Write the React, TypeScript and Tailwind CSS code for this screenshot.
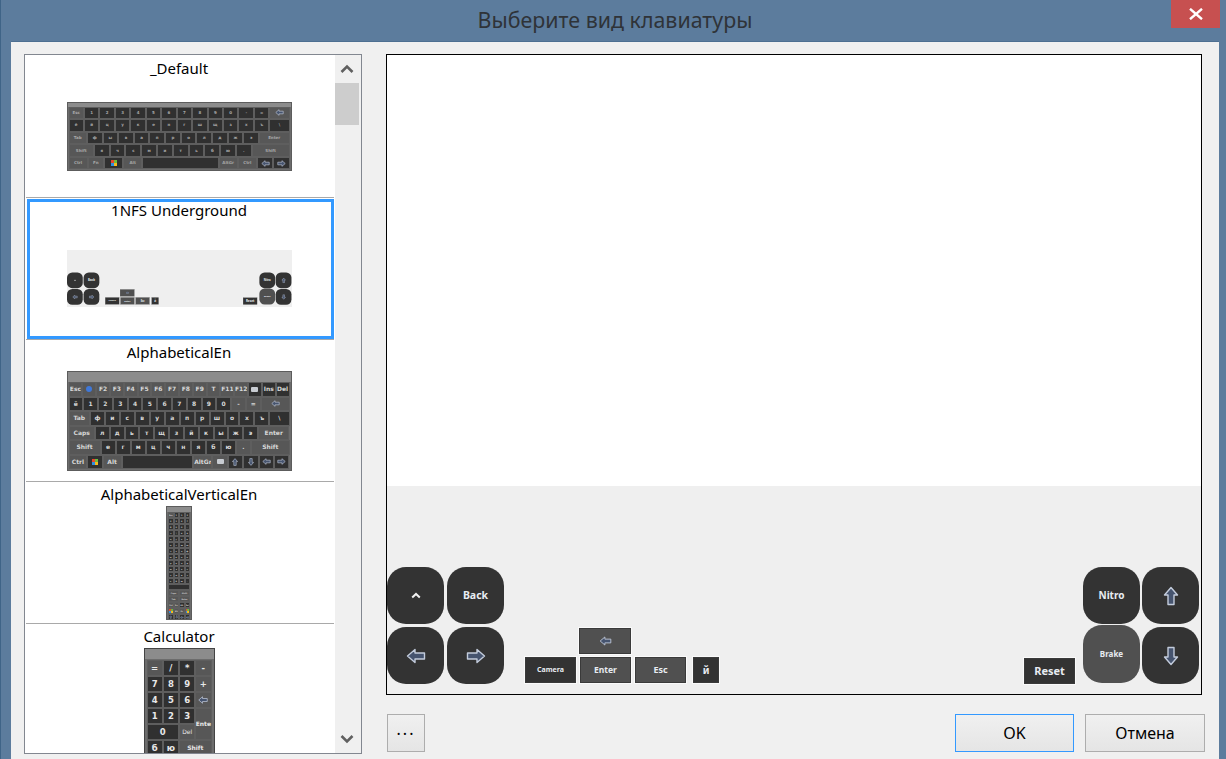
import { clsx } from 'clsx'

type Dir = 'left' | 'right' | 'up' | 'down'
type MiniKeyDef = { t: string; w?: number; light?: boolean }

const dirClass: Record<Dir, string> = {
  left: '',
  right: 'rotate-180',
  up: 'rotate-90',
  down: '-rotate-90',
}

function Arrow({ dir, className }: { dir: Dir; className?: string }) {
  return (
    <svg viewBox="0 0 20 16" className={clsx(dirClass[dir], className)}>
      <path
        d="M1.5 8 L9 1.5 V5 H18.5 V11 H9 V14.5 Z"
        fill="#46546f"
        stroke="#c3ccdc"
        strokeWidth="1.4"
        strokeLinejoin="round"
      />
    </svg>
  )
}

function WinLogo({ className }: { className?: string }) {
  return (
    <span className={clsx('grid grid-cols-2', className)}>
      <span className="bg-[#e8452c]" />
      <span className="bg-[#6cbb3c]" />
      <span className="bg-[#2f8fe0]" />
      <span className="bg-[#f6b91b]" />
    </span>
  )
}

function keys(s: string, light = false): MiniKeyDef[] {
  return s.split(' ').map((t) => ({ t, light }))
}

function MiniKey({ def }: { def: MiniKeyDef }) {
  let content = <span>{def.t}</span>
  if (def.t === '<') content = <Arrow dir="left" className="w-[9px] h-[7px]" />
  if (def.t === '>') content = <Arrow dir="right" className="w-[9px] h-[7px]" />
  if (def.t === '^') content = <Arrow dir="up" className="w-[8px] h-[8px]" />
  if (def.t === 'v') content = <Arrow dir="down" className="w-[8px] h-[8px]" />
  if (def.t === 'win') content = <WinLogo className="w-[6px] h-[6px]" />
  if (def.t === 'dot') content = <span className="h-[6px] w-[6px] rounded-full bg-[#3f78d8]" />
  if (def.t === 'card') content = <span className="h-[5px] w-[7px] rounded-[1px] bg-[#c8ccd2]" />
  if (def.t === '_') content = <span />
  return (
    <div
      className={clsx(
        'flex min-w-0 items-center justify-center overflow-hidden border border-[#5e5e5e]',
        def.light ? 'bg-[#575757]' : 'bg-[#303030]',
      )}
      style={{ flexGrow: def.w ?? 1, flexBasis: 0 }}
    >
      {content}
    </div>
  )
}

function MiniKeyboard({
  rows,
  className,
  textClass,
  band,
  rowClass,
}: {
  rows: MiniKeyDef[][]
  className: string
  textClass: string
  band: string
  rowClass: string
}) {
  return (
    <div
      className={clsx(
        'flex shrink-0 flex-col border border-[#5c5c5c] bg-[#6c6c6c] font-["DejaVu_Sans",sans-serif] font-bold leading-none',
        className,
        textClass,
      )}
    >
      <div className={clsx('shrink-0 bg-[#8c8c8c]', band)} />
      <div className="flex flex-1 flex-col px-px">
        {rows.map((row, i) => (
          <div key={i} className={clsx('flex', rowClass)}>
            {row.map((def, j) => (
              <MiniKey key={j} def={def} />
            ))}
          </div>
        ))}
      </div>
    </div>
  )
}

const defaultRows: MiniKeyDef[][] = [
  [{ t: 'Esc', light: true }, ...keys('1 2 3 4 5 6 7 8 9 0 - ='), { t: '<', w: 1.35, light: true }],
  [...keys('ё й ц у к е н г ш щ з х ъ'), { t: '\\', w: 1.35 }],
  [{ t: 'Tab', w: 1.2, light: true }, ...keys('ф ы в а п р о л д ж э'), { t: 'Enter', w: 2.1, light: true }],
  [{ t: 'Shift', w: 1.7, light: true }, ...keys('я ч с м и т ь б ю .'), { t: 'Shift', w: 2.6, light: true }],
  [
    { t: 'Ctrl', w: 1.2, light: true },
    { t: 'Fn', light: true },
    { t: 'win', w: 1.2 },
    { t: 'Alt', w: 1.2, light: true },
    { t: '_', w: 5.2 },
    { t: 'AltGr', w: 1.2, light: true },
    { t: 'Ctrl', w: 1.2, light: true },
    { t: '<' },
    { t: '>' },
  ],
]

const alphaRows: MiniKeyDef[][] = [
  [
    { t: 'Esc', light: true },
    { t: 'dot', light: true },
    ...keys('F2 F3 F4 F5 F6 F7 F8 F9', true),
    { t: 'T', light: true },
    ...keys('F11 F12', true),
    { t: 'card' },
    { t: 'Ins' },
    { t: 'Del' },
  ],
  [...keys('ё 1 2 3 4 5 6 7 8 9 0'), ...keys('- =', true), { t: '<', w: 2.1, light: true }],
  [{ t: 'Tab', w: 1.5, light: true }, ...keys('ф и с в у а п р ш о х ъ'), { t: '\\', w: 1.4 }],
  [{ t: 'Caps', w: 1.9, light: true }, ...keys('л д ь т щ з й к ы ж э'), { t: 'Enter', w: 2.3, light: true }],
  [{ t: 'Shift', w: 2.3, light: true }, ...keys('е г м ц ч н я б ю'), { t: '.', light: true }, { t: 'Shift', w: 2.8, light: true }],
  [
    { t: 'Ctrl', w: 1.25, light: true },
    { t: 'win' },
    { t: 'Alt', w: 1.25, light: true },
    { t: '_', w: 5.2 },
    { t: 'AltGr', w: 1.25, light: true },
    { t: 'card', light: true },
    { t: '^' },
    { t: 'v' },
    { t: '<' },
    { t: '>' },
  ],
]

const verticalRows: MiniKeyDef[][] = [
  [{ t: 'Esc', light: true }, ...keys('1 2 3')],
  ...['4 5 6 7', '8 9 0 -', '= \\ ё й', 'ц у к е', 'н г ш щ', 'з х ъ ф', 'ы в а п', 'р о л д', 'ж э я ч', 'с м и т', 'ь б ю .'].map((s) => keys(s)),
  [{ t: '_' }],
  [{ t: 'Caps', light: true }, { t: 'Shift', light: true }],
  [{ t: 'Tab', light: true }, { t: 'Enter', light: true }],
  [...keys('Ctrl', true), { t: 'Fn', light: true }, { t: 'Alt' }, { t: 'Del' }],
  [{ t: 'win' }, { t: 'Alt', light: true }, { t: 'Gr', light: true }, { t: 'win' }],
  [...keys('^ v < >')],
]

function CalcKey({ t, light, className }: { t: string; light?: boolean; className?: string }) {
  return (
    <div
      className={clsx(
        'flex items-center justify-center border border-[#5e5e5e]',
        light ? 'bg-[#575757]' : 'bg-[#303030]',
        className,
      )}
    >
      {t === '<' ? <Arrow dir="left" className="h-[8px] w-[10px]" /> : t}
    </div>
  )
}

function Calculator() {
  const cells: [string, boolean?][] = [
    ['=', true], ['/'], ['*'], ['-', true],
    ['7'], ['8'], ['9'], ['+', true],
    ['4'], ['5'], ['6'], ['<', true],
    ['1'], ['2'], ['3'],
  ]
  return (
    <div className='flex h-[120px] w-[71px] shrink-0 flex-col border border-[#444] bg-[#6c6c6c] font-["DejaVu_Sans",sans-serif] text-[8.5px] font-bold leading-none text-[#e8e8e8]'>
      <div className="h-[10px] shrink-0 bg-[#8c8c8c]" />
      <div className="grid grid-cols-4 auto-rows-[16px] px-[2px] pt-px">
        {cells.map(([t, light], i) => (
          <CalcKey key={i} t={t} light={light} />
        ))}
        <CalcKey t="Ente" light className="row-span-2 text-[6px]" />
        <CalcKey t="0" className="col-span-2" />
        <CalcKey t="Del" light className="text-[6px] font-normal" />
        <CalcKey t="б" />
        <CalcKey t="ю" />
        <CalcKey t="Shift" light className="col-span-2 text-[6px]" />
      </div>
    </div>
  )
}

function RoundKey({ children, light, className }: { children: React.ReactNode; light?: boolean; className?: string }) {
  return (
    <div
      className={clsx(
        'flex w-[57px] items-center justify-center rounded-[19px] font-bold text-[#e8ecf2]',
        light ? 'bg-[#505050]' : 'bg-[#333333]',
        className ?? 'h-[57px]',
      )}
    >
      {children}
    </div>
  )
}

function RectKey({ children, light, className }: { children: React.ReactNode; light?: boolean; className?: string }) {
  return (
    <div
      className={clsx(
        'flex h-[26px] items-center justify-center border border-[#3a3a3a] font-bold text-[#e8ecf2] outline outline-1 outline-[#fafafa]',
        light ? 'bg-[#505050]' : 'bg-[#333333]',
        className,
      )}
    >
      {children}
    </div>
  )
}

// same layout is used big in the preview and scaled down in the list
function NfsLayout() {
  return (
    <div className='flex h-[208px] w-[814px] items-end bg-[#efefef] pb-[10px] font-["Noto_Sans",sans-serif] text-[11px]'>
      <div className="grid grid-cols-[57px_57px] gap-[3px]">
        <RoundKey>
          <svg viewBox="0 0 10 7" className="h-[7px] w-[10px]">
            <path d="M1.2 5.6 L5 2 L8.8 5.6" fill="none" stroke="#f2f2f2" strokeWidth="2" />
          </svg>
        </RoundKey>
        <RoundKey className="h-[57px] text-[10.5px]">Back</RoundKey>
        <RoundKey>
          <Arrow dir="left" className="h-[16px] w-[20px]" />
        </RoundKey>
        <RoundKey>
          <Arrow dir="right" className="h-[16px] w-[20px]" />
        </RoundKey>
      </div>
      <div className="ml-[21px] flex flex-col gap-[3px] pb-px">
        <div className="ml-[54px]">
          <RectKey light className="w-[52px]">
            <Arrow dir="left" className="h-[10px] w-[13px]" />
          </RectKey>
        </div>
        <div className="flex">
          <RectKey className="w-[51px] text-[7px]">Camera</RectKey>
          <RectKey light className="ml-[4px] w-[51px] text-[8.5px]">Enter</RectKey>
          <RectKey light className="ml-[4px] w-[51px] text-[9px]">Esc</RectKey>
          <RectKey className="ml-[7px] w-[26px] text-[10px]">й</RectKey>
        </div>
      </div>
      <RectKey className="ml-auto w-[51px]">Reset</RectKey>
      <div className="ml-[8px] mr-[2px] grid grid-cols-[57px_57px] items-end gap-x-[2px] gap-y-[3px]">
        <RoundKey className="h-[57px] text-[10px]">Nitro</RoundKey>
        <RoundKey>
          <Arrow dir="up" className="h-[20px] w-[20px]" />
        </RoundKey>
        <RoundKey light className="-mt-[3px] mb-px h-[58px] text-[8px]">Brake</RoundKey>
        <RoundKey>
          <Arrow dir="down" className="h-[20px] w-[20px]" />
        </RoundKey>
      </div>
    </div>
  )
}

function NfsThumb() {
  return (
    <div className="h-[57px] w-[225px] overflow-hidden">
      <div className="origin-top-left scale-[0.2764]">
        <NfsLayout />
      </div>
    </div>
  )
}

function ListItem({ name, selected, children }: { name: string; selected?: boolean; children: React.ReactNode }) {
  return (
    <div className="mx-px h-[142px] shrink-0 border-b border-[#a9a9a9] pt-px">
      <div className={clsx('flex h-[140px] flex-col items-center', selected ? 'ml-px border-[3px] border-[#3399ff] pr-[3px]' : 'mr-[2px]')}>
        <div className={clsx('text-[15px] leading-[22px] text-black', selected ? '-mt-[3px] h-[21px]' : 'h-[23px]')}>{name}</div>
        <div className={clsx('flex h-[114px] items-center justify-center', selected && 'mt-px')}>{children}</div>
      </div>
    </div>
  )
}

function ScrollArrow({ up }: { up?: boolean }) {
  return (
    <div className="flex h-[28px] items-center justify-center pr-[2px]">
      <svg viewBox="0 0 14 10" className={clsx('h-[10px] w-[14px]', !up && 'rotate-180')}>
        <path d="M1.5 8 L7 2.5 L12.5 8" fill="none" stroke="#606060" strokeWidth="2.6" />
      </svg>
    </div>
  )
}

function DialogButton({ children, active, className }: { children: React.ReactNode; active?: boolean; className?: string }) {
  return (
    <button
      className={clsx(
        'flex h-[38px] items-center justify-center border bg-gradient-to-b from-[#f0f0f0] to-[#e5e5e5] text-[16px] text-black',
        active ? 'border-[#3399ff]' : 'border-[#adadad]',
        className,
      )}
    >
      {children}
    </button>
  )
}

export default function App() {
  return (
    <div className='flex h-[759px] w-[1226px] flex-col overflow-hidden border-l border-[#3f6487] bg-[#5c7c9d] font-["Noto_Sans",sans-serif]'>
      <div className="relative flex h-[41px] shrink-0 items-center justify-center pb-[1px] text-[21.4px] text-[#2f3338]">
        <span className="ml-[3px]">Выберите вид клавиатуры</span>
        <div className="absolute right-[6px] top-0 flex h-[28px] w-[49px] items-center justify-center bg-[#c75050]">
          <svg viewBox="0 0 14 12" className="h-[12px] w-[14px]">
            <path d="M1 0.8 L13 11.2 M13 0.8 L1 11.2" stroke="#fff" strokeWidth="2.4" />
          </svg>
        </div>
      </div>
      <div className="ml-[10px] mr-[7px] flex min-h-0 flex-1 gap-[24px] border-t border-[#4d6f91] bg-[#f0f0f0] pl-[13px] pt-[12px]">
        <div className="flex h-[700px] w-[338px] shrink-0 overflow-hidden border border-[#828790] bg-white">
          <div className="flex w-[310px] shrink-0 flex-col overflow-hidden pt-px">
            <ListItem name="_Default">
              <MiniKeyboard rows={defaultRows} className="mb-[2px] h-[69px] w-[225px] text-[#a8a8a8]" textClass="text-[4px]" band="h-[4px]" rowClass="h-[12.6px]" />
            </ListItem>
            <ListItem name="1NFS Underground" selected>
              <NfsThumb />
            </ListItem>
            <ListItem name="AlphabeticalEn">
              <MiniKeyboard rows={alphaRows} className="h-[100px] w-[225px] text-[#d8d8d8]" textClass="text-[6px]" band="h-[10px]" rowClass="h-[14.5px]" />
            </ListItem>
            <ListItem name="AlphabeticalVerticalEn">
              <MiniKeyboard rows={verticalRows} className="h-[114px] w-[26px] text-[#c8c8c8]" textClass="text-[2px]" band="h-[5px]" rowClass="h-[6px]" />
            </ListItem>
            <ListItem name="Calculator">
              <div className="self-start">
                <Calculator />
              </div>
            </ListItem>
          </div>
          <div className="flex w-[26px] flex-col justify-between bg-[#f0f0f0]">
            <div className="flex flex-col">
              <ScrollArrow up />
              <div className="mr-[2px] h-[42px] bg-[#cdcdcd]" />
            </div>
            <ScrollArrow />
          </div>
        </div>
        <div className="flex flex-col">
          <div className="flex h-[641px] w-[816px] flex-col border border-black bg-white">
            <div className="flex-1" />
            <NfsLayout />
          </div>
          <div className="mt-[19px] flex w-[819px]">
            <DialogButton className="ml-px w-[38px] pb-[8px] tracking-[2px]">...</DialogButton>
            <DialogButton active className="ml-auto w-[119px]">OK</DialogButton>
            <DialogButton className="ml-[11px] w-[120px]">Отмена</DialogButton>
          </div>
        </div>
      </div>
    </div>
  )
}
